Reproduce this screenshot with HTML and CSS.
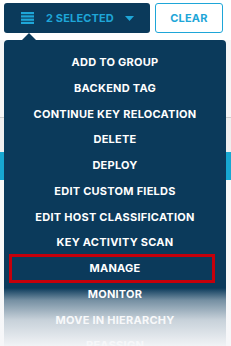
FILE: index.html
```html
<!DOCTYPE html>
<html>
<head>
    <title>Bulk Actions</title>
    <link rel="stylesheet" href="styles.css">
</head>
<body>
    <div class="toolbar">
        <button class="select-but">
            <svg class="list-icon" width="13" height="12" viewBox="0 0 13 12">
                <rect x="0" y="0" width="13" height="2.2"/>
                <rect x="0" y="3.3" width="13" height="2.2"/>
                <rect x="0" y="6.6" width="13" height="2.2"/>
                <rect x="0" y="9.8" width="13" height="2.2"/>
            </svg>
            <span>2 SELECTED</span>
            <svg class="caret" width="9" height="5" viewBox="0 0 9 5">
                <polygon points="0,0 9,0 4.5,5"/>
            </svg>
        </button>
        <button class="clear-but">CLEAR</button>
    </div>

    <div class="page">
        <div class="filters"></div>
        <div class="subbar"></div>
        <div class="table-head"></div>
        <div class="rows"></div>
    </div>

    <ul class="dropdown">
        <li>ADD TO GROUP</li>
        <li>BACKEND TAG</li>
        <li>CONTINUE KEY RELOCATION</li>
        <li>DELETE</li>
        <li>DEPLOY</li>
        <li>EDIT CUSTOM FIELDS</li>
        <li>EDIT HOST CLASSIFICATION</li>
        <li>KEY ACTIVITY SCAN</li>
        <li class="marked">MANAGE</li>
        <li>MONITOR</li>
        <li>MOVE IN HIERARCHY</li>
        <li>REASSIGN</li>
    </ul>

    <div class="fade"></div>
</body>
</html>
```

FILE: styles.css
```css
body {
    margin: 0;
    background-color: #ffffff;
    font-family: Inter, "Liberation Sans", sans-serif;
    height: 346px;
    overflow: hidden;
    position: relative;
}

.toolbar {
    display: flex;
    gap: 5px;
    padding: 3px 4px 0 4px;
    height: 30px;
}

.select-but {
    display: flex;
    align-items: center;
    height: 30px;
    padding: 0 16px 0 17px;
    background-color: #0b3a5b;
    color: #1ea6d8;
    border: none;
    border-radius: 3px;
    font-family: inherit;
    font-size: 11px;
    font-weight: 700;
    letter-spacing: 0.15px;
    cursor: pointer;
}

.list-icon {
    fill: #1ea6d8;
    margin-right: 12px;
}

.caret {
    fill: #1ea6d8;
    margin-left: 11px;
}

.clear-but {
    height: 30px;
    width: 68px;
    background-color: white;
    color: #1ea6d8;
    border: 1px solid #1ea6d8;
    border-radius: 3px;
    font-family: inherit;
    font-size: 11px;
    font-weight: 700;
    letter-spacing: 0.15px;
    cursor: pointer;
}

.page {
    margin-top: 7px;
}

.filters {
    height: 77px;
    background-color: #f6f6f6;
    border-bottom: 1px solid #cfcfcf;
}

.subbar {
    height: 34px;
    background-color: #efefef;
}

.table-head {
    height: 28px;
    background-color: #17a7d1;
}

.rows {
    height: 200px;
    background-color: #f8f8f8;
}

.dropdown {
    position: absolute;
    top: 40px;
    left: 4px;
    width: 222px;
    margin: 0;
    padding: 10px 0 0 0;
    list-style: none;
    background-color: #0b3a5b;
    border-radius: 4px 4px 0 0;
}

.dropdown::before {
    content: "";
    position: absolute;
    top: -7px;
    left: 18px;
    border-left: 7px solid transparent;
    border-right: 7px solid transparent;
    border-bottom: 7px solid #0b3a5b;
}

.dropdown li {
    position: relative;
    height: 25.75px;
    line-height: 25.75px;
    text-align: center;
    color: white;
    font-size: 11px;
    font-weight: 700;
    letter-spacing: 0.25px;
}

.dropdown li.marked::after {
    content: "";
    position: absolute;
    top: -1.6px;
    bottom: -1.6px;
    left: 5px;
    right: 11px;
    border: 3px solid #c5000b;
}

.fade {
    position: absolute;
    left: 0;
    right: 0;
    bottom: 0;
    height: 58px;
    background: linear-gradient(rgba(246, 247, 249, 0), rgba(246, 247, 249, 0.45) 21%, rgba(246, 247, 249, 0.8) 55%, rgba(246, 247, 249, 0.98));
    pointer-events: none;
}
```
